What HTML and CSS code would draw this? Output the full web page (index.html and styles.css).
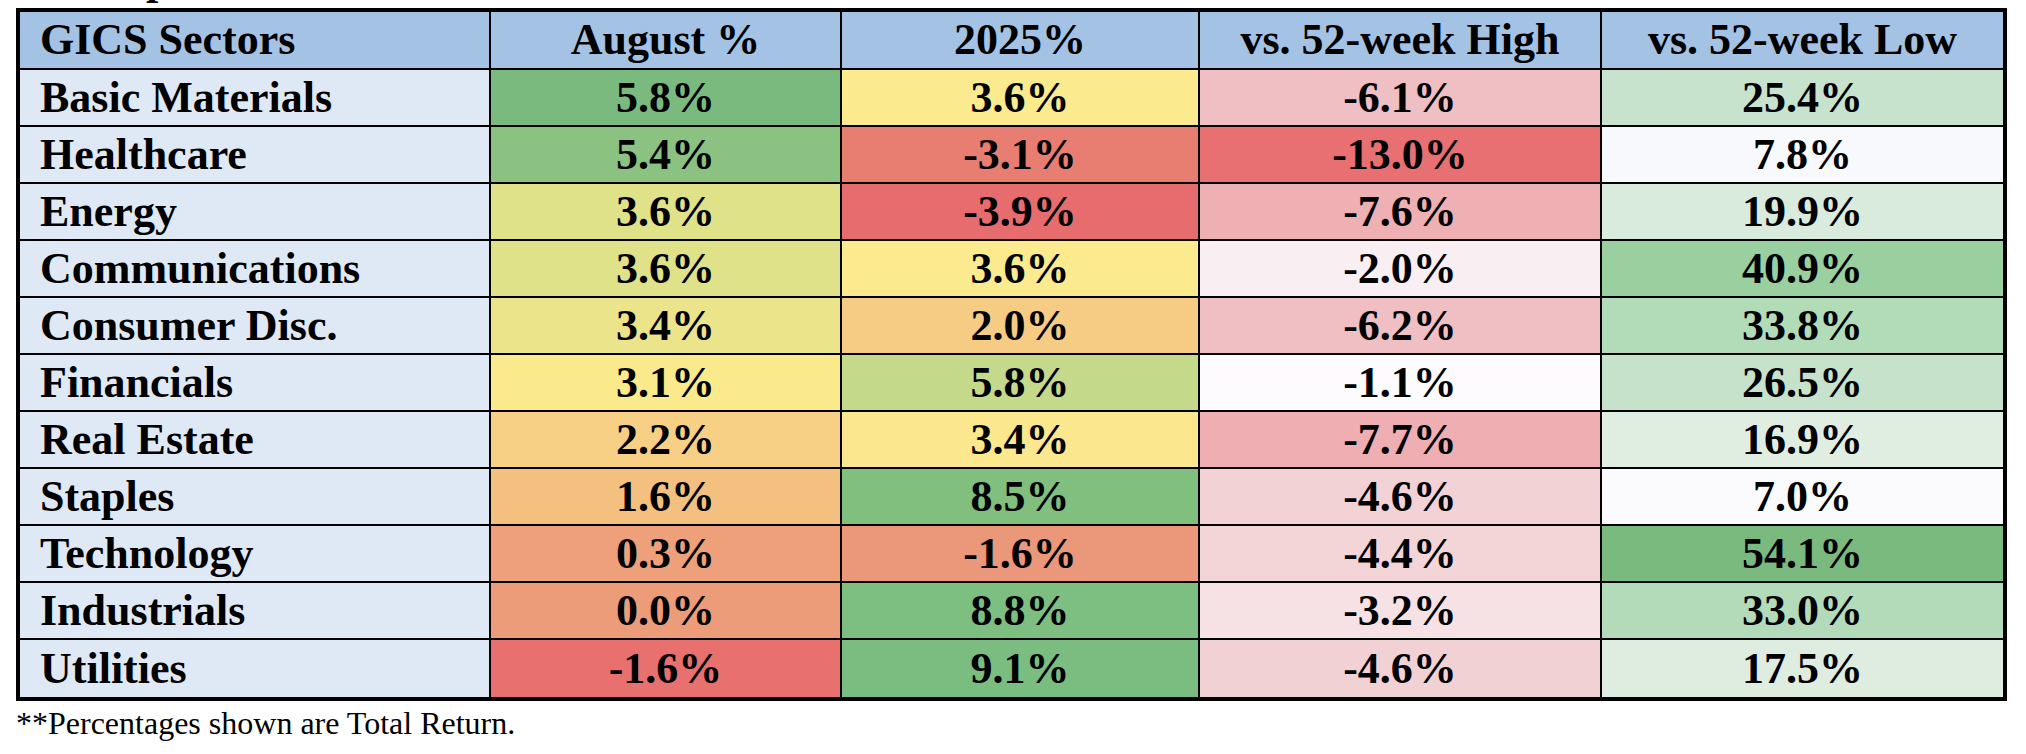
FILE: index.html
```html
<!DOCTYPE html>
<html lang="en">
<head>
<meta charset="utf-8">
<title>GICS Sectors</title>
<link rel="stylesheet" href="styles.css">
</head>
<body>
<div class="page">
  <div class="title">Sector performance</div>
  <table class="sectors">
    <thead>
      <tr>
        <th class="name">GICS Sectors</th>
        <th class="c2">August %</th>
        <th class="c3">2025%</th>
        <th class="c4">vs. 52-week High</th>
        <th class="c5">vs. 52-week Low</th>
      </tr>
    </thead>
    <tbody>
      <tr><td class="name">Basic Materials</td><td class="c2" style="background:#7aba7e">5.8%</td><td class="c3" style="background:#fbea8e">3.6%</td><td class="c4" style="background:#f0bfc3">-6.1%</td><td class="c5" style="background:#c8e3cd">25.4%</td></tr>
      <tr><td class="name">Healthcare</td><td class="c2" style="background:#8bc282">5.4%</td><td class="c3" style="background:#e77e71">-3.1%</td><td class="c4" style="background:#e87072">-13.0%</td><td class="c5" style="background:#f8f9fc">7.8%</td></tr>
      <tr><td class="name">Energy</td><td class="c2" style="background:#e0e28a">3.6%</td><td class="c3" style="background:#e66c6e">-3.9%</td><td class="c4" style="background:#eeb0b3">-7.6%</td><td class="c5" style="background:#d9ebdc">19.9%</td></tr>
      <tr><td class="name">Communications</td><td class="c2" style="background:#e0e28a">3.6%</td><td class="c3" style="background:#fbea8e">3.6%</td><td class="c4" style="background:#f9eef1">-2.0%</td><td class="c5" style="background:#9acfa0">40.9%</td></tr>
      <tr><td class="name">Consumer Disc.</td><td class="c2" style="background:#ebe48b">3.4%</td><td class="c3" style="background:#f6cc84">2.0%</td><td class="c4" style="background:#f0bfc3">-6.2%</td><td class="c5" style="background:#b2dbb8">33.8%</td></tr>
      <tr><td class="name">Financials</td><td class="c2" style="background:#fbea8c">3.1%</td><td class="c3" style="background:#c5d98a">5.8%</td><td class="c4" style="background:#fdfbfd">-1.1%</td><td class="c5" style="background:#c6e2ca">26.5%</td></tr>
      <tr><td class="name">Real Estate</td><td class="c2" style="background:#f8d085">2.2%</td><td class="c3" style="background:#fbe78d">3.4%</td><td class="c4" style="background:#eeaeb2">-7.7%</td><td class="c5" style="background:#e0eee2">16.9%</td></tr>
      <tr><td class="name">Staples</td><td class="c2" style="background:#f4c07f">1.6%</td><td class="c3" style="background:#80bf7e">8.5%</td><td class="c4" style="background:#f2d2d5">-4.6%</td><td class="c5" style="background:#fbfbfd">7.0%</td></tr>
      <tr><td class="name">Technology</td><td class="c2" style="background:#eda07a">0.3%</td><td class="c3" style="background:#ea977a">-1.6%</td><td class="c4" style="background:#f3d4d7">-4.4%</td><td class="c5" style="background:#7aba7e">54.1%</td></tr>
      <tr><td class="name">Industrials</td><td class="c2" style="background:#ec9c79">0.0%</td><td class="c3" style="background:#7cbf80">8.8%</td><td class="c4" style="background:#f6e1e4">-3.2%</td><td class="c5" style="background:#b3dab9">33.0%</td></tr>
      <tr class="last"><td class="name">Utilities</td><td class="c2" style="background:#e8706f">-1.6%</td><td class="c3" style="background:#7bbd80">9.1%</td><td class="c4" style="background:#f2d1d4">-4.6%</td><td class="c5" style="background:#deede0">17.5%</td></tr>
    </tbody>
  </table>
  <p class="note">**Percentages shown are Total Return.</p>
</div>
</body>
</html>
```

FILE: styles.css
```css
html, body {
  margin: 0;
  padding: 0;
  background: #ffffff;
}

body {
  font-family: "Liberation Serif", "Times New Roman", serif;
  color: #000000;
  overflow: hidden;
}

.page {
  padding-left: 16px;
}

.title {
  margin-top: -42px;
  height: 44px;
  line-height: 44px;
  font-size: 44px;
  font-weight: bold;
  white-space: nowrap;
}

.sectors {
  margin-top: 6px;
  border: 4px solid #000000;
  border-spacing: 0;
  table-layout: fixed;
  width: 1987px;
  font-weight: bold;
  font-size: 44px;
}

.sectors th,
.sectors td {
  padding: 0;
  border-right: 2px solid #000000;
  border-bottom: 2px solid #000000;
  text-align: center;
  white-space: nowrap;
  line-height: 1;
}

.sectors th {
  height: 56px;
  background: #a4c2e4;
}

.sectors td {
  height: 55px;
}

.sectors tr.last td {
  height: 57px;
  border-bottom: none;
}

.sectors th:last-child,
.sectors td:last-child {
  border-right: none;
}

.sectors .name {
  width: 471px;
  text-align: left;
  padding-left: 20px;
  box-sizing: border-box;
}

.sectors td.name {
  background: #dfe9f5;
}

.sectors .c2 { width: 349px; }
.sectors .c3 { width: 356px; }
.sectors .c4 { width: 400px; }
.sectors .c5 { width: 401px; }

.note {
  margin: 4px 0 0 0;
  font-size: 32px;
  line-height: 36px;
  font-weight: normal;
}
```
